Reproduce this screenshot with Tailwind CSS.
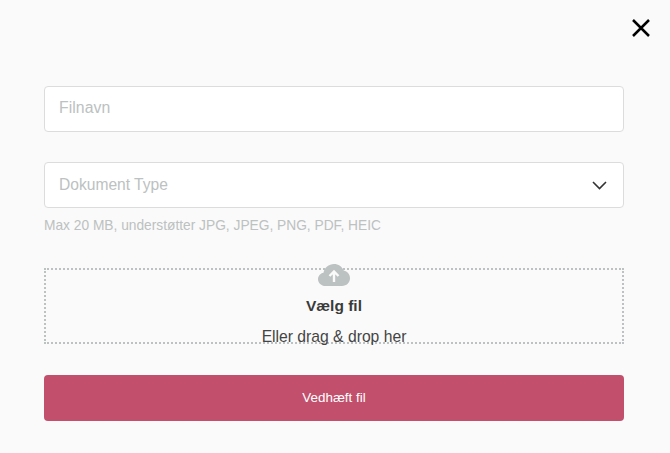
<!DOCTYPE html>
<html>
<head>
<meta charset="utf-8">
<script src="https://cdn.jsdelivr.net/npm/@tailwindcss/browser@4"></script>
</head>
<body class="m-0 bg-[#fafafa]">
<div class="w-[670px] h-[453px] bg-[#fafafa] overflow-hidden flex flex-col font-['Liberation_Sans',Arial,sans-serif]">
  <div class="h-[86px] flex justify-end items-start pt-[19px] pr-[20px] shrink-0">
    <svg class="w-[18px] h-[18px]" viewBox="0 0 18 18" fill="none" stroke="#000" stroke-width="2.5"><path d="M1 1L17 17M17 1L1 17"/></svg>
  </div>
  <div class="flex flex-col px-[44px]">
    <div class="h-[46px] w-[580px] rounded-[4px] border border-[#dcdcdc] bg-white flex items-center px-[14px] pb-[2px] text-[15.8px] tracking-[0.05px] text-[#bcc1c1]">Filnavn</div>
    <div class="h-[46px] w-[580px] mt-[30px] rounded-[4px] border border-[#dcdcdc] bg-white flex items-center justify-between pl-[14px] pr-[16px] text-[15.6px] text-[#bcc1c1]">
      <span>Dokument Type</span>
      <svg class="w-[15px] h-[9px] mt-[1px]" viewBox="0 0 15 9" fill="none" stroke="#333" stroke-width="1.6"><path d="M1 1L7.5 7.5L14 1"/></svg>
    </div>
    <p class="mt-[9px] h-[18px] leading-[18px] text-[13.75px] text-[#bcc1c1]">Max 20 MB, understøtter JPG, JPEG, PNG, PDF, HEIC</p>
    <div class="mt-[33px] h-[76px] w-[580px] border-2 border-dotted border-[#bcc1c1] flex flex-col items-center">
      <svg class="w-[32px] h-[22px] mt-[-6px] shrink-0" viewBox="0 0 32 22"><path fill="#bcc1c1" d="M7.5 22C3.3 22 0 18.9 0 15.2C0 12 2.3 9.4 5.5 8.8C6.3 3.8 10.8 0 16 0C20.4 0 24.2 2.7 25.7 6.6C29.4 7.4 32 10.6 32 14.3C32 18.6 28.6 22 24 22Z"/><path fill="none" stroke="#fafafa" stroke-width="2.4" d="M16 18V7.5M11.5 12L16 7.5L20.5 12"/></svg>
      <div class="mt-[10px] leading-[20px] text-[15.5px] font-bold text-[#3a3a3a]">Vælg fil</div>
      <div class="mt-[11px] leading-[20px] text-[15.7px] text-[#444444]">Eller drag &amp; drop her</div>
    </div>
    <button class="mt-[31px] h-[46px] w-[580px] rounded-[4px] bg-[#c24f6c] text-white text-[13.4px]">Vedhæft fil</button>
  </div>
</div>
</body>
</html>
